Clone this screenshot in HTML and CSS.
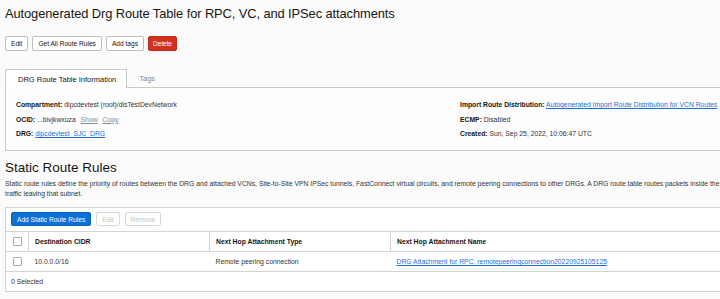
FILE: index.html
```html
<!DOCTYPE html>
<html lang="en">
<head>
    <meta charset="UTF-8">
    <meta name="viewport" content="width=device-width, initial-scale=1.0">
    <title>DRG Route Table</title>
    <link rel="stylesheet" href="styles.css">
</head>
<body>
    <div class="page">
        <h1>Autogenerated Drg Route Table for RPC, VC, and IPSec attachments</h1>

        <div class="actions">
            <button class="btn">Edit</button>
            <button class="btn">Get All Route Rules</button>
            <button class="btn">Add tags</button>
            <button class="btn btn-danger">Delete</button>
        </div>

        <div class="tabs">
            <div class="tab active">DRG Route Table Information</div>
            <div class="tab">Tags</div>
        </div>
        <div class="info-panel">
            <div class="info-col">
                <div class="info-row"><b>Compartment:</b> dipcdevtest (root)/disTestDevNetwork</div>
                <div class="info-row"><b>OCID:</b> ...bivjkwxuza <a class="muted">Show</a> <a class="muted">Copy</a></div>
                <div class="info-row"><b>DRG:</b> <a class="link">dipcdevtest_SJC_DRG</a></div>
            </div>
            <div class="info-col">
                <div class="info-row"><b>Import Route Distribution:</b> <a class="link">Autogenerated Import Route Distribution for VCN Routes</a></div>
                <div class="info-row"><b>ECMP:</b> Disabled</div>
                <div class="info-row"><b>Created:</b> Sun, Sep 25, 2022, 10:06:47 UTC</div>
            </div>
        </div>

        <h2>Static Route Rules</h2>
        <p class="desc">Static route rules define the priority of routes between the DRG and attached VCNs, Site-to-Site VPN IPSec tunnels, FastConnect virtual circuits, and remote peering connections to other DRGs. A DRG route table routes packets inside the traffic leaving that subnet.</p>

        <div class="rules">
            <div class="toolbar">
                <button class="btn btn-primary">Add Static Route Rules</button>
                <button class="btn" disabled>Edit</button>
                <button class="btn" disabled>Remove</button>
            </div>
            <table class="rules-table">
                <thead>
                    <tr>
                        <th class="check"><span class="box"></span></th>
                        <th class="col-cidr">Destination CIDR</th>
                        <th class="col-type">Next Hop Attachment Type</th>
                        <th>Next Hop Attachment Name</th>
                    </tr>
                </thead>
                <tbody>
                    <tr>
                        <td class="check"><span class="box"></span></td>
                        <td>10.0.0.0/16</td>
                        <td>Remote peering connection</td>
                        <td><a class="link">DRG Attachment for RPC: remotepeeringconnection20220925105125</a></td>
                    </tr>
                </tbody>
            </table>
            <div class="table-footer">0 Selected</div>
        </div>
    </div>
</body>
</html>
```

FILE: styles.css
```css
body {
    margin: 0;
    background: #fbfbfb;
    font-family: "Liberation Sans", Arial, sans-serif;
    color: #161513;
    overflow: hidden;
}
.page {
    width: 760px;
    padding-left: 5px;
}
h1 {
    margin: 0;
    padding-top: 4px;
    font-size: 12.9px;
    letter-spacing: -0.1px;
    font-weight: normal;
    line-height: 20px;
}
.actions {
    display: flex;
    gap: 4px;
    margin-top: 12px;
}
.btn {
    height: 15px;
    padding: 0 5px;
    font-family: inherit;
    font-size: 6.6px;
    color: #161513;
    background: #fff;
    border: 1px solid #bdbdbd;
    border-radius: 2px;
}
.btn-danger {
    background: #d3311f;
    border-color: #c42b1b;
    color: #fff;
    padding: 0 4px;
}
.btn-primary {
    background: #0a6fd6;
    border-color: #0a64c2;
    color: #fff;
}
.btn:disabled {
    color: #c4c4c4;
    border-color: #d8d8d8;
    background: #fff;
}
.tabs {
    display: flex;
    margin-top: 18px;
}
.tab {
    height: 18px;
    line-height: 19px;
    padding: 0 10px 0 12px;
    font-size: 7.5px;
    color: #888;
}
.tab.active {
    color: #161513;
    background: #fff;
    border: 1px solid #c9c9c9;
    border-bottom: none;
    margin-bottom: -1px;
    position: relative;
}
.info-panel {
    display: grid;
    grid-template-columns: 444px 1fr;
    border: 1px solid #c9c9c9;
    border-right: none;
    background: #fdfdfd;
    height: 42px;
    padding: 10px 10px 10px 10px;
}
.info-row {
    font-size: 6.8px;
    line-height: 14.5px;
    color: #333;
}
.info-row b {
    color: #161513;
}
.link {
    color: #1f6fd8;
    text-decoration: underline;
}
.muted {
    color: #8a8a8a;
    text-decoration: underline;
    margin-left: 3px;
}
h2 {
    margin: 7px 0 0;
    font-size: 13.5px;
    font-weight: normal;
    line-height: 20px;
}
.desc {
    margin: 1px 0 0;
    width: 725px;
    font-size: 6.8px;
    line-height: 10px;
    color: #333;
}
.rules {
    margin-top: 8px;
    border: 1px solid #d4d4d4;
    border-right: none;
    background: #fff;
}
.toolbar {
    display: flex;
    gap: 5px;
    padding: 4px 5px 5px;
}
.toolbar .btn {
    height: 14px;
}
.rules-table {
    width: 100%;
    border-collapse: collapse;
    font-size: 6.8px;
}
.rules-table th,
.rules-table td {
    height: 19px;
    padding: 0 0 0 6px;
    text-align: left;
    border-top: 1px solid #d4d4d4;
    color: #333;
}
.rules-table th {
    color: #161513;
    border-left: 1px solid #d4d4d4;
}
.rules-table th.check {
    border-left: none;
}
.rules-table .check {
    width: 15px;
    padding-left: 7px;
}
.col-cidr {
    width: 174px;
}
.col-type {
    width: 174px;
}
.box {
    display: block;
    width: 7px;
    height: 7px;
    border: 1px solid #aaa;
    border-radius: 1px;
    background: #fff;
}
.table-footer {
    border-top: 1px solid #d4d4d4;
    height: 19px;
    line-height: 19px;
    padding-left: 5px;
    font-size: 6.8px;
    color: #333;
}
```
